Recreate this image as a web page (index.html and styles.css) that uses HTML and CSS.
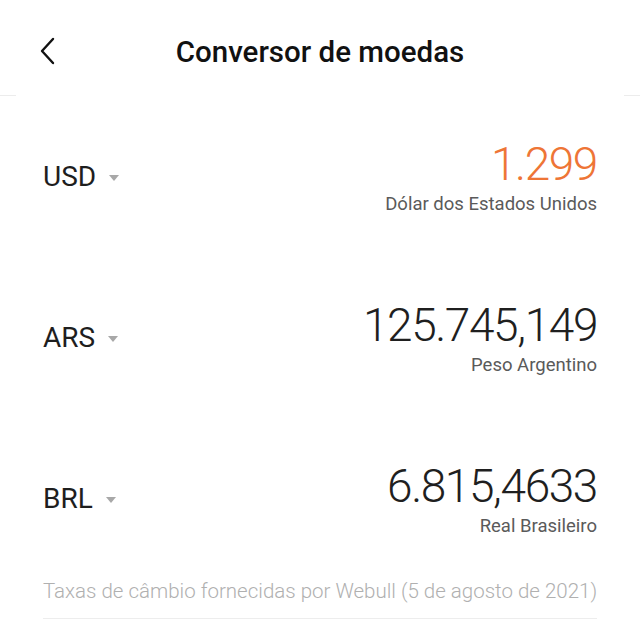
FILE: index.html
```html
<!DOCTYPE html>
<html lang="pt">
<head>
  <meta charset="UTF-8">
  <title>Conversor de moedas</title>
  <link rel="stylesheet" href="styles.css">
</head>
<body>

  <header class="topbar">
    <button class="back-btn" aria-label="Voltar">
      <svg width="16" height="30" viewBox="0 0 16 30">
        <polyline points="13,2 2,14 13,26" fill="none" stroke="#111" stroke-width="2.4" stroke-linecap="round" stroke-linejoin="round"/>
      </svg>
    </button>
    <h1>Conversor de moedas</h1>
    <span></span>
  </header>
  <div class="topbar-line"><span></span><span></span></div>

  <main class="list">
    <div class="row">
      <div class="code">USD <span class="caret"></span></div>
      <div class="amount">
        <div class="value active">1.299</div>
        <div class="name">Dólar dos Estados Unidos</div>
      </div>
    </div>

    <div class="row">
      <div class="code">ARS <span class="caret"></span></div>
      <div class="amount">
        <div class="value">125.745,149</div>
        <div class="name">Peso Argentino</div>
      </div>
    </div>

    <div class="row">
      <div class="code">BRL <span class="caret"></span></div>
      <div class="amount">
        <div class="value">6.815,4633</div>
        <div class="name">Real Brasileiro</div>
      </div>
    </div>

    <p class="source">Taxas de câmbio fornecidas por Webull (5 de agosto de 2021)</p>
  </main>

</body>
</html>
```

FILE: styles.css
```css
body {
  margin: 0;
  background: #fff;
  font-family: Roboto, 'Noto Sans', sans-serif;
  color: #222;
}

.topbar {
  height: 95px;
  box-sizing: border-box;
  padding-top: 8px;
  display: grid;
  grid-template-columns: 1fr auto 1fr;
  align-items: center;
}

.back-btn {
  justify-self: start;
  margin-left: 40px;
  padding: 0;
  border: none;
  background: none;
  display: flex;
}

.topbar h1 {
  margin: 0;
  font-size: 29.5px;
  font-weight: 500;
  color: #111;
}

.topbar-line {
  display: flex;
  justify-content: space-between;
}

.topbar-line span {
  width: 16px;
  height: 1px;
  background: #ececec;
}

.list {
  padding: 0 43px;
}

.row {
  height: 161px;
  display: flex;
  justify-content: space-between;
  align-items: center;
}

.code {
  display: flex;
  align-items: center;
  gap: 13px;
  font-size: 28px;
  line-height: 32px;
  color: #1e1e1e;
}

.caret {
  width: 0;
  height: 0;
  border-left: 5px solid transparent;
  border-right: 5px solid transparent;
  border-top: 6px solid #a8a8a8;
  margin-top: 2px;
}

.amount {
  text-align: right;
}

.value {
  font-size: 46px;
  line-height: 50px;
  font-weight: 300;
  letter-spacing: -1.4px;
  color: #1f1f1f;
}

.value.active {
  color: #ee7536;
}

.name {
  font-size: 18.5px;
  line-height: 22px;
  margin-top: 4px;
  color: #5a5a5a;
}

.source {
  margin: 0;
  padding-bottom: 15px;
  border-bottom: 1px solid #ededed;
  font-size: 20.5px;
  line-height: 24px;
  font-weight: 300;
  white-space: nowrap;
  color: #b0b0b0;
  text-align: right;
}
```
